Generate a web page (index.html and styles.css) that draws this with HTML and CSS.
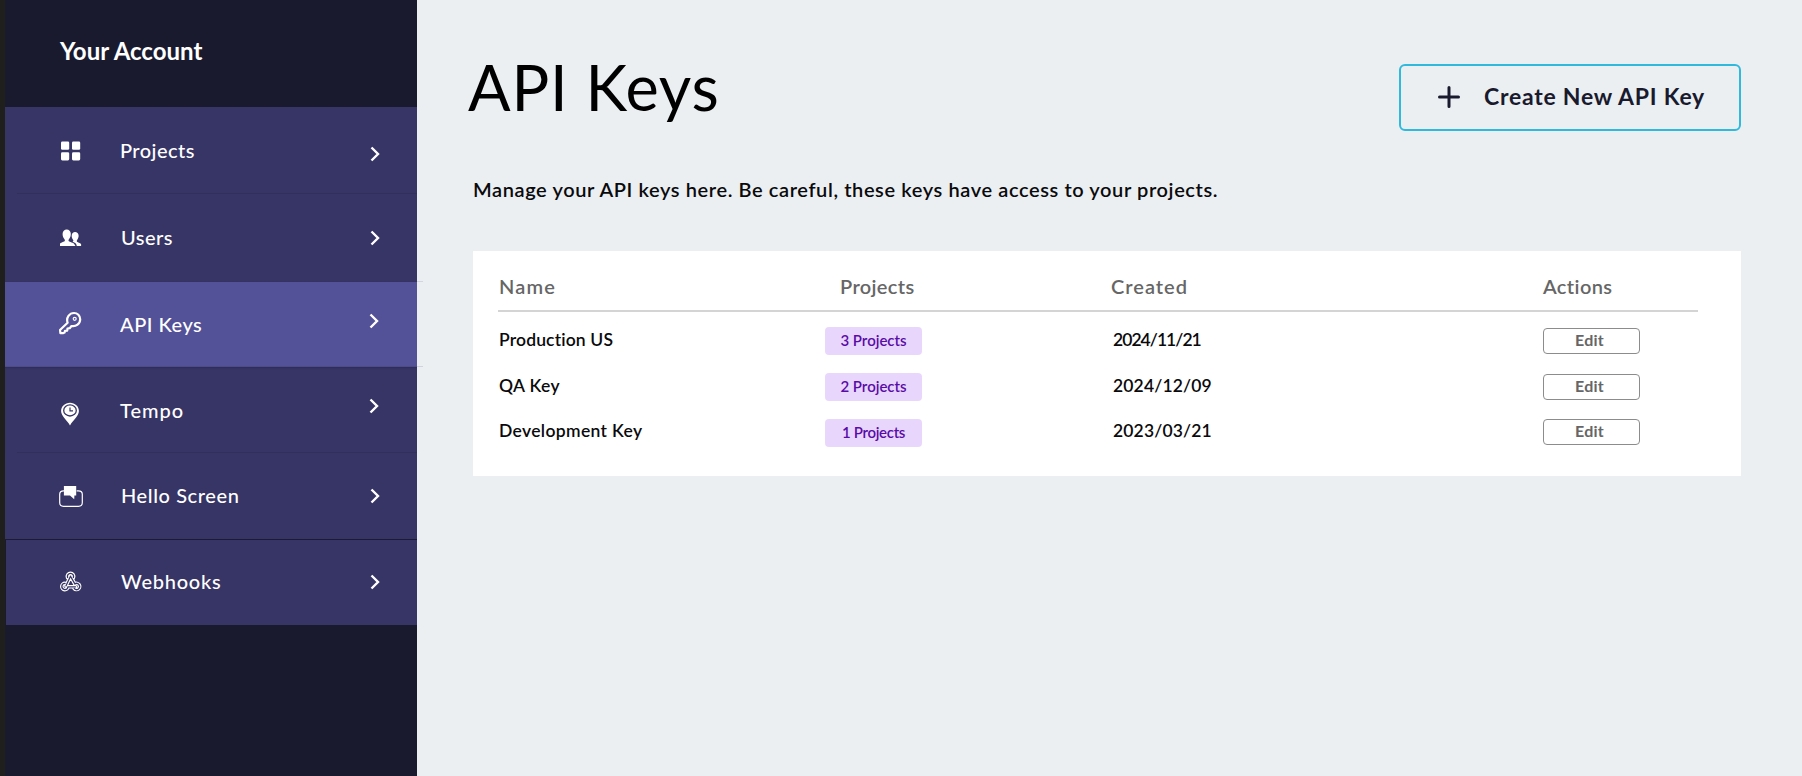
FILE: index.html
```html
<!DOCTYPE html>
<html lang="en">
<head>
<meta charset="utf-8">
<title>API Keys</title>
<link rel="stylesheet" href="styles.css">
</head>
<body>
<div class="app">
  <aside class="sidebar">
    <div class="account">Your Account</div>
    <nav class="menu">
      <a class="item item-projects">
        <svg class="icon" viewBox="0 0 24 24"><g fill="#fff"><rect x="2" y="2.500" width="8.200" height="8.200" rx="1.300"/><rect x="13" y="2.500" width="8.200" height="8.200" rx="1.300"/><rect x="2" y="13.200" width="8.200" height="8.200" rx="1.300"/><rect x="13" y="13.200" width="8.200" height="8.200" rx="1.300"/></g></svg>
        <span class="label">Projects</span>
        <svg class="chevron" viewBox="0 0 10 16"><path d="M1.500 1.500 8 8l-6.500 6.500"/></svg>
      </a>
      <a class="item item-users">
        <svg class="icon" viewBox="0 0 24 24"><path fill="#fff" d="M1 20v-2.200c.2-1.300 3.500-1.700 4.600-2.600.5-.5.300-1.400-.1-2C4.200 11.900 3.500 10 3.600 7.800 3.700 5.200 5.400 3.600 7.700 3.600s4 1.600 4.100 4.200c.1 2.200-.6 4.100-1.900 5.400-.4.6-.6 1.500-.1 2 1.100.9 4.700 1.300 5.400 2.700L16.500 20z"/><path fill="#fff" d="M17.800 20c-.3-2.300-1.600-3.300-4.200-4.200.9-.7 1-1.200.4-2-.9-1.200-1.400-2.600-1.300-4.200.1-2.200 1.500-3.600 3.400-3.600s3.400 1.400 3.500 3.600c.1 1.700-.5 3.200-1.500 4.300-.5.800-.4 1.600.3 2.100 1.100.7 3.300 1.200 3.700 2.200V20z"/></svg>
        <span class="label">Users</span>
        <svg class="chevron" viewBox="0 0 10 16"><path d="M1.500 1.500 8 8l-6.500 6.500"/></svg>
      </a>
      <a class="item item-keys">
        <svg class="icon" viewBox="0 0 24 24"><path fill="none" stroke="#fff" stroke-width="2.200" stroke-linejoin="round" d="M8.600 11.700C6.900 6.600 10.500 2 15 2c3.400 0 6.200 2.600 6.200 6.200 0 4.400-4.200 7.700-8.700 6.800l-1.800 2.200-2.200.3-.3 2.100-2.200.3-.5 1.700-1.500.6H1.400L1 19z"/><circle cx="15.700" cy="7.800" r="1.500" fill="none" stroke="#fff" stroke-width="1.200"/></svg>
        <span class="label">API Keys</span>
        <svg class="chevron" viewBox="0 0 10 16"><path d="M1.500 1.500 8 8l-6.500 6.500"/></svg>
      </a>
      <a class="item item-tempo">
        <svg class="icon" viewBox="0 0 24 24"><path fill="#fff" d="M11 .8c-5 0-8.900 3.600-8.900 8.300 0 4.900 5.600 8.900 8.900 14.300 3.300-5.400 8.900-9.400 8.900-14.300C19.900 4.400 16 .8 11 .8z"/><ellipse cx="11" cy="8.400" rx="6.300" ry="5.600" fill="none" stroke="#373565" stroke-width="1.300"/><path d="M11 5.600v3.300h3" fill="none" stroke="#373565" stroke-width="1.200"/></svg>
        <span class="label">Tempo</span>
        <svg class="chevron" viewBox="0 0 10 16"><path d="M1.500 1.500 8 8l-6.500 6.500"/></svg>
      </a>
      <a class="item item-hello">
        <svg class="icon" viewBox="0 0 24 24"><path fill="none" stroke="#fff" stroke-width="1.200" d="M5.500 6.800H4.600C2 6.800.7 8.300.7 10.300v8.200c0 2.500 1.300 3.800 3.800 3.800h15c2.500 0 3.800-1.300 3.800-3.800v-8.200c0-2.200-1.200-3.500-3.900-3.500h-1.800"/><path fill="#fff" d="M4.900 1.900h12.300v9.600h-1.800l-.2 3.700-4.200-3.700H4.900z"/></svg>
        <span class="label">Hello Screen</span>
        <svg class="chevron" viewBox="0 0 10 16"><path d="M1.500 1.500 8 8l-6.500 6.500"/></svg>
      </a>
      <a class="item item-hooks">
        <svg class="icon" viewBox="0 0 24 24"><g fill="none" stroke-linecap="round"><path stroke="#fff" stroke-width="3.600" d="M8.600 7.500a3.100 3.100 0 1 1 5.800 0M11.500 6.200 7 15.800M6 13.400a3.100 3.100 0 1 0 3 3.400h7.500M11.500 6.200l4.300 7.700a3.100 3.100 0 1 1-.6 4.600"/><path stroke="#373565" stroke-width="1.300" d="M8.600 7.500a3.100 3.100 0 1 1 5.800 0M11.500 6.200 7 15.800M6 13.400a3.100 3.100 0 1 0 3 3.400h7.500M11.500 6.200l4.300 7.700a3.100 3.100 0 1 1-.6 4.600"/></g></svg>
        <span class="label">Webhooks</span>
        <svg class="chevron" viewBox="0 0 10 16"><path d="M1.500 1.500 8 8l-6.500 6.500"/></svg>
      </a>
    </nav>
  </aside>
  <main class="main">
    <header class="top">
      <h1 class="title">API Keys</h1>
      <button class="create"><svg class="plus" viewBox="0 0 22 22"><path d="M11 1.500v19M1.500 11h19"/></svg><span class="create-text">Create New API Key</span></button>
    </header>
    <p class="intro">Manage your API keys here. Be careful, these keys have access to your projects.</p>
    <section class="card">
      <div class="row head"><span class="name">Name</span><span class="projects">Projects</span><span class="created">Created</span><span class="actions">Actions</span></div>
      <div class="row"><span class="name production">Production US</span><span class="pill">3 Projects</span><span class="date narrow">2024/11/21</span><button class="edit">Edit</button></div>
      <div class="row"><span class="name">QA Key</span><span class="pill">2 Projects</span><span class="date">2024/12/09</span><button class="edit">Edit</button></div>
      <div class="row last"><span class="name">Development Key</span><span class="pill single">1 Projects</span><span class="date">2023/03/21</span><button class="edit">Edit</button></div>
    </section>
  </main>
</div>
</body>
</html>
```
FILE: styles.css
```css
* { box-sizing: border-box; }
body { margin: 0; font-family: Lato, "Open Sans", sans-serif; background: #ebeff2; color: #0a0a0c; }
.app { display: flex; height: 776px; overflow: hidden; }

.sidebar { width: 417px; flex: none; border-left: 5px solid #1f201e; background: #1a1a2e; color: #fff; }
.account { height: 107px; padding: 36px 0 0 55px; font-size: 24px; line-height: 30px; font-weight: 700; }

.item { position: relative; display: flex; align-items: center; height: 86px; padding: 0 37px 0 54px; background: #373565; font-size: 20px; font-weight: 500; }
.item::after { content: ""; position: absolute; left: 12px; right: 0; bottom: 0; height: 1px; background: #312f5b; }
.item-projects { height: 87px; }
.item-users { height: 88px; }
.item-users::after { left: 0; right: -6px; background: rgba(40, 40, 75, .12); }
.item-keys { height: 85px; background: #535198; }
.item-keys::after { left: 0; right: -6px; background: rgba(40, 40, 75, .14); }
.item-tempo { box-shadow: inset 0 2px 2px -1px #2e2c55; }
.item-hello { height: 87px; }
.item-hello::after { left: 0; background: #1b1b33; }
.item-hooks { height: 85px; margin-left: 1px; padding-left: 53px; }
.item-hooks::after { display: none; }

.icon { width: 24px; height: 24px; flex: none; margin-right: 38px; }
.label { flex: 1; padding-bottom: 1px; letter-spacing: .5px; }
.item-projects .label { margin-left: -1px; letter-spacing: .45px; }
.item-users .label { padding-bottom: 2px; }
.item-keys .icon { margin-top: -4px; }
.item-keys .label, .item-tempo .label { margin-left: -1px; }
.item-keys .label { padding-bottom: 2px; }
.item-tempo .label { padding-bottom: 0; letter-spacing: 1px; }
.item-tempo .icon { margin-top: 7px; }
.item-hello .label, .item-hooks .label { padding-bottom: 4px; letter-spacing: .6px; }
.item-hooks .label { letter-spacing: .75px; }
.item-hello .icon, .item-hello .chevron, .item-hooks .icon, .item-hooks .chevron { margin-top: -1px; }

.chevron { width: 10px; height: 16px; flex: none; fill: none; stroke: #fff; stroke-width: 2.400; }
.item-projects .chevron { margin-top: 6px; }
.item-keys .chevron, .item-tempo .chevron { margin: -8px 1px 0 -1px; }

.main { flex: 1; padding: 64px 61px 0 56px; }
.top { display: flex; justify-content: space-between; height: 67px; }
.title { margin: 0 0 0 -5px; font-size: 63px; line-height: 45px; font-weight: 400; letter-spacing: .8px; color: #000; }
.create { display: flex; align-items: center; width: 342px; height: 67px; padding: 0 0 0 37px; border: 2px solid #2fb9dc; border-radius: 6px; background: none; font: 700 23px Lato, sans-serif; color: #1a1a2e; }
.plus { width: 22px; height: 22px; margin: -1px 24px 0 0; fill: none; stroke: #1a1a2e; stroke-width: 3; stroke-linecap: round; }
.create-text { padding-bottom: 3px; letter-spacing: .75px; }
.intro { margin: 46px 0 0; font-size: 20px; line-height: 24px; font-weight: 600; letter-spacing: .6px; white-space: nowrap; }

.card { margin-top: 50px; height: 225px; background: #fff; padding: 0 43px 0 25px; }
.row { display: grid; grid-template-columns: 327px 286px 432px 155px; align-items: center; height: 46px; font-size: 17.500px; font-weight: 600; }
.head { height: 61px; margin-bottom: 6px; padding-top: 11px; border-bottom: 2px solid #d4d4d4; font-size: 20px; color: #666; }
.name { padding: 0 0 4px 1px; letter-spacing: .35px; }
.production { letter-spacing: .15px; }
.head .name { padding: 0 0 0 1px; letter-spacing: 1.200px; }
.projects { padding-left: 15px; letter-spacing: .35px; }
.created { letter-spacing: 1px; }
.actions { letter-spacing: .4px; }
.pill { width: 97px; height: 28px; margin-top: -1px; border-radius: 4px; background: #e9d6fd; color: #5a0ca6; font-size: 15px; line-height: 27px; text-align: center; }
.single { letter-spacing: -.3px; }
.date { padding: 0 0 4px 2px; letter-spacing: .15px; }
.narrow { letter-spacing: -.95px; }
.last .name, .last .date { padding-bottom: 5px; }
.edit { width: 97px; height: 26px; padding: 0 4px 2px 0; border: 1px solid #8c8c8c; border-radius: 4px; background: #fff; color: #666; font: 700 16px/20px Lato, sans-serif; letter-spacing: .2px; }
.last .edit { margin-top: -2px; }
```
